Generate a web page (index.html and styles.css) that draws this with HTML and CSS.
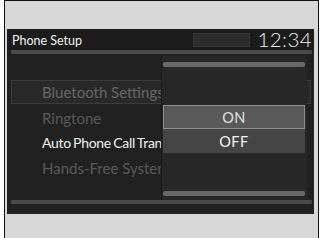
FILE: index.html
```html
<!DOCTYPE html>
<html lang="en">
<head>
    <meta charset="UTF-8">
    <meta name="viewport" content="width=device-width, initial-scale=1.0">
    <title>Phone Setup</title>
    <link rel="stylesheet" href="styles.css">
</head>
<body>
    <div class="frame">
        <div class="screen">
            <div class="header">
                <span class="title">Phone Setup</span>
                <span class="status-box"></span>
                <span class="clock">12:34</span>
            </div>
            <div class="bar"></div>

            <div class="list">
                <div class="row selected dim">Bluetooth Settings</div>
                <div class="row dim">Ringtone</div>
                <div class="row current">Auto Phone Call Transfer</div>
                <div class="row dim">Hands-Free System Volume</div>
            </div>

            <div class="bar bottom"></div>

            <!-- menu over the list -->
            <div class="popup">
                <div class="popup-bar"></div>
                <div class="popup-space"></div>
                <div class="option active">ON</div>
                <div class="option">OFF</div>
                <div class="popup-space"></div>
                <div class="popup-bar"></div>
            </div>
        </div>
    </div>
</body>
</html>
```

FILE: styles.css
```css
* {
    margin: 0;
    padding: 0;
    box-sizing: border-box;
    font-family: 'Lato', 'Liberation Sans', sans-serif;
}

body {
    background: #ffffff;
    width: 322px;
    height: 238px;
    overflow: hidden;
}

.frame {
    margin-left: 4px;
    width: 315px;
    height: 238px;
    background: #d7d7d7;
    border-top: 1px solid #111;
    border-left: 1px solid #111;
    border-right: 1px solid #111;
    padding: 28px 0 0 2px;
}

.screen {
    position: relative;
    width: 307px;
    height: 185px;
    background: #212121;
    overflow: hidden;
}

.header {
    height: 21px;
    display: flex;
    align-items: center;
    padding: 0 2px 0 5px;
    background: #1c1c1c;
}

.title {
    color: #f2f2f2;
    font-size: 12.5px;
    margin-top: 2px;
}

.status-box {
    margin-left: auto;
    width: 57px;
    height: 14px;
    background: #2c2c2c;
    border: 1px solid #353535;
}

.clock {
    margin-left: 8px;
    color: #eeeeee;
    font-size: 20.5px;
    font-weight: 300;
    line-height: 21px;
    letter-spacing: 0.4px;
}

.bar {
    height: 4px;
    margin: 0 2px 0 4px;
    background: #4a4a4a;
    border-radius: 1px;
}

.bar.bottom {
    margin-top: 20px;
}

.list {
    padding: 26px 3px 0 4px;
}

.row {
    height: 25px;
    display: flex;
    align-items: center;
    padding-left: 31px;
    font-size: 15px;
    color: #f0f0f0;
    white-space: nowrap;
    overflow: hidden;
}

.row.current {
    font-size: 14px;
    letter-spacing: -0.3px;
    word-spacing: -1px;
}

.row.dim {
    color: #5a5a5a;
}

.row.selected {
    height: 24px;
    margin-bottom: 1px;
    background: #292929;
    border: 1px solid #3c3c3c;
    padding-left: 30px;
    color: #666;
}

.popup {
    position: absolute;
    left: 154px;
    top: 27px;
    width: 146px;
    height: 144px;
    background: #272727;
    border-left: 1px solid #1a1a1a;
    display: flex;
    flex-direction: column;
    padding: 6px 2px 0 1px;
}

.popup-bar {
    height: 5px;
    background: #696969;
    border-radius: 2px;
}

.popup-space {
    height: 38px;
}

.option {
    height: 24px;
    display: flex;
    align-items: center;
    justify-content: center;
    font-size: 14.5px;
    color: #f4f4f4;
    background: #454545;
    letter-spacing: 0.5px;
}

.option.active {
    background: #595959;
    border: 1px solid #8e8e8e;
    color: #e2e2e2;
}
```
